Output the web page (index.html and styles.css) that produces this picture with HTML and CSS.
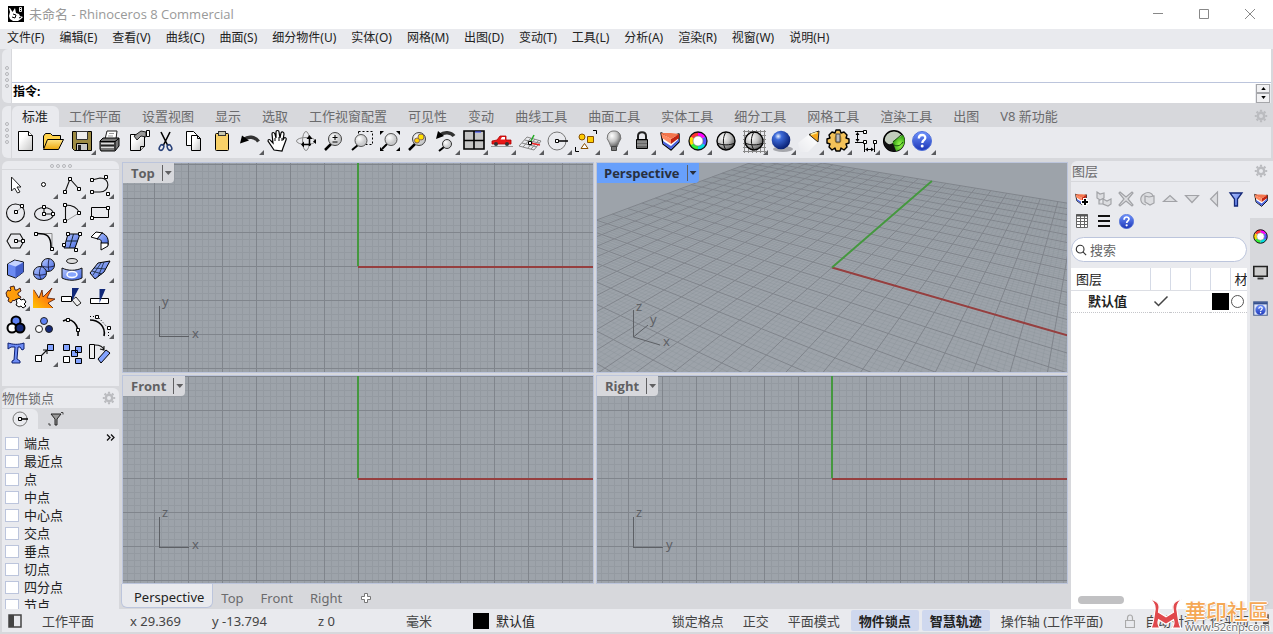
FILE: index.html
```html
<!DOCTYPE html>
<html lang="zh-CN">
<head>
<meta charset="utf-8">
<title>未命名 - Rhinoceros 8 Commercial</title>
<link rel="stylesheet" href="styles.css">
</head>
<body>
<svg class="defs" aria-hidden="true">
  <defs>
    <linearGradient id="blue" x1="0" y1="0" x2="1" y2="1"><stop offset="0" stop-color="#b4c6ff"/><stop offset="1" stop-color="#4468e0"/></linearGradient>
    <linearGradient id="help" x1="0" y1="0" x2="0" y2="1"><stop offset="0" stop-color="#6f94ff"/><stop offset="1" stop-color="#1c35b5"/></linearGradient>
    <linearGradient id="paper" x1="0" y1="0" x2="1" y2="1"><stop offset="0.3" stop-color="#fff"/><stop offset="1" stop-color="#c4c4c4"/></linearGradient>
    <linearGradient id="gold" x1="0" y1="0" x2="0" y2="1"><stop offset="0" stop-color="#ffe68a"/><stop offset="1" stop-color="#eda70c"/></linearGradient>
    <linearGradient id="fire" x1="1" y1="0" x2="0" y2="1"><stop offset="0" stop-color="#ff4a00"/><stop offset="0.4" stop-color="#ff7a10"/><stop offset="1" stop-color="#ffc400"/></linearGradient>
    <linearGradient id="beam" x1="1" y1="0" x2="0" y2="1"><stop offset="0.1" stop-color="#fff"/><stop offset="1" stop-color="#fff" stop-opacity="0"/></linearGradient>
    <radialGradient id="glass" cx="0.35" cy="0.35"><stop offset="0" stop-color="#fff"/><stop offset="1" stop-color="#c9cacc"/></radialGradient>
    <radialGradient id="ballgray" cx="0.35" cy="0.3" r="0.75"><stop offset="0" stop-color="#fff"/><stop offset="0.5" stop-color="#c4c4c4"/><stop offset="1" stop-color="#555"/></radialGradient>
    <radialGradient id="ballblue" cx="0.35" cy="0.3" r="0.75"><stop offset="0" stop-color="#e8f2ff"/><stop offset="0.25" stop-color="#3d6ad8"/><stop offset="1" stop-color="#041a6c"/></radialGradient>
    <radialGradient id="ballgreen" cx="0.6" cy="0.6" r="0.6"><stop offset="0" stop-color="#9bff50"/><stop offset="1" stop-color="#2d9c10"/></radialGradient>
    <symbol id="gear" viewBox="0 0 14 14"><g fill="none" stroke="#bbbcc0"><circle cx="7" cy="7" r="3.2" stroke-width="2.4"/><path d="M7 .8v2M7 11.200v2M.8 7h2M11.200 7h2M2.600 2.600l1.500 1.500M9.900 9.900l1.500 1.500M2.600 11.400l1.500-1.500M9.900 4.100l1.500-1.500" stroke-width="2.200"/></g></symbol>
    <symbol id="lens" viewBox="0 0 28 28"><path d="M5 23l6-6" stroke="#000" stroke-width="2.500"/><circle cx="15" cy="12" r="6.500" fill="url(#glass)" stroke="#444"/></symbol>
    <symbol id="wheel" viewBox="0 0 20 20"><g fill="none" stroke-width="4"><path d="M10 3A7 7 0 0 1 16 6.500" stroke="#f0f"/><path d="M4 6.500A7 7 0 0 1 10 3" stroke="#f33"/><path d="M4 13.500A7 7 0 0 1 4 6.500" stroke="#fd0"/><path d="M10 17A7 7 0 0 1 4 13.500" stroke="#3e3"/><path d="M16 13.500A7 7 0 0 1 10 17" stroke="#0dd"/><path d="M16 6.500A7 7 0 0 1 16 13.500" stroke="#55f"/></g><circle cx="10" cy="10" r="9" fill="none" stroke="#111" stroke-width="1.300"/><circle cx="10" cy="10" r="5" fill="#fff" stroke="#666" stroke-width=".6"/></symbol>
    <symbol id="layers" viewBox="0 0 20 20"><path d="M1 2l9 3.500L19 3v8l-8 8-8-6z" fill="#fff" stroke="#000" stroke-width="1.400" stroke-linejoin="round"/><path d="M3 12.500l8 6 8-8V8l-8 7-8-5z" fill="#4a63dc"/><path d="M11 8l8-5v4l-8 6z" fill="#c32410"/><path d="M1 2l10 6v5L2 7z" fill="#ff8a62"/><path d="M1 2l10 0 8 1-8 5z" fill="#f4754c"/></symbol>
    <symbol id="question" viewBox="0 0 20 20"><circle cx="10" cy="10" r="9.500" fill="url(#help)" stroke="#5070d8"/><path d="M6.800 7.500C6.800 2.800 13.500 3 13.300 7c-.2 2.200-3 2.400-3 5" fill="none" stroke="#fff" stroke-width="2.300"/><circle cx="10.200" cy="15" r="1.500" fill="#fff"/></symbol>
    <symbol id="sphere" viewBox="0 0 20 20"><circle cx="10" cy="10" r="9" fill="url(#ballgray)" stroke="#000" stroke-width="1.400"/><path d="M10 1c-3.500 5-3.500 13 0 18M1 12c5 2.500 13 2.500 18 0" fill="none" stroke="#111"/></symbol>
  </defs>
</svg>

<div class="app">
  <header class="titlebar">
    <svg class="applogo" viewBox="0 0 16 16"><path fill="#000" d="M0 0h16v16H0z"/><path fill="#fff" d="M1 2l1 0 2.500 4L7 2l1 5 3 1 1 2 3 1-2 2-3 2H5L2 13l-1-3 1-4z"/><path d="M5 8l3 1-1 3-3-1M11 12l2-1" stroke="#000" fill="none"/><path d="M11.500 1.500h2v2h-2zM11.500 3.500h2v2h-2z" stroke="#fff" stroke-width=".9" fill="none"/></svg>
    <h1>未命名 - Rhinoceros 8 Commercial</h1>
    <div class="winbtns">
      <button aria-label="最小化"><svg viewBox="0 0 12 12"><path d="M1 5.500h10"/></svg></button>
      <button aria-label="最大化"><svg viewBox="0 0 12 12"><path d="M1.500 1.500h9v9h-9z"/></svg></button>
      <button aria-label="关闭"><svg viewBox="0 0 12 12"><path d="M1 1l10 10M11 1L1 11"/></svg></button>
    </div>
  </header>

  <nav class="menubar">
    <button>文件(F)</button><button>编辑(E)</button><button>查看(V)</button><button>曲线(C)</button><button>曲面(S)</button><button>细分物件(U)</button><button>实体(O)</button><button>网格(M)</button><button>出图(D)</button><button>变动(T)</button><button>工具(L)</button><button>分析(A)</button><button>渲染(R)</button><button>视窗(W)</button><button>说明(H)</button>
  </nav>

  <section class="command">
    <div class="grip"><i></i><i></i><i></i><i></i></div>
    <div class="cmdbody">
      <div class="history"></div>
      <div class="prompt">
        <label for="cmd">指令:</label><input id="cmd" type="text">
        <div class="spin"><button aria-label="上"><svg viewBox="0 0 6 4"><path d="M0 4l3-4 3 4z"/></svg></button><button aria-label="下"><svg viewBox="0 0 6 4"><path d="M0 0l3 4 3-4z"/></svg></button></div>
      </div>
    </div>
  </section>

  <section class="toolbox">
    <div class="grip"><i></i><i></i><i></i><i></i></div>
    <div class="toolbody">
      <div class="tabs">
        <button class="on">标准</button><button>工作平面</button><button>设置视图</button><button>显示</button><button>选取</button><button>工作视窗配置</button><button>可见性</button><button>变动</button><button>曲线工具</button><button>曲面工具</button><button>实体工具</button><button>细分工具</button><button>网格工具</button><button>渲染工具</button><button>出图</button><button>V8 新功能</button>
        <svg class="gear"><use href="#gear"/></svg>
      </div>
      <div class="tools">
        <button aria-label="新建"><svg viewBox="0 0 28 28"><path d="M6.500 4.500h10l4 4v15h-14z" fill="url(#paper)" stroke="#000"/><path d="M16.500 4.500v4h4" fill="#fff" stroke="#000"/></svg></button>
        <button aria-label="打开"><svg viewBox="0 0 28 28"><path d="M3.500 21V9l2-2.500h5l2 2h8V12" fill="#ffd24a" stroke="#000"/><path d="M3.500 22.500l4-10h16l-5 10z" fill="url(#gold)" stroke="#000"/></svg></button>
        <button aria-label="保存" class="fly"><svg viewBox="0 0 28 28"><path d="M4.500 4.500h19v19h-17l-2-2z" fill="#9c8a42" stroke="#000"/><path d="M8.500 4.500h11v8h-11z" fill="#eee" stroke="#333"/><path d="M8.500 16.500h11v7h-11z" fill="#c9c9c9" stroke="#000"/><path d="M10 18h3v5h-3z" fill="#222"/></svg></button>
        <button aria-label="打印"><svg viewBox="0 0 28 28"><path d="M9 12l2-8h10l-1 8z" fill="#fff" stroke="#222"/><path d="M13 6.500h5M12 9h5" stroke="#999"/><path d="M4 14l3-3h16v8l-4 5H5l-1-2z" fill="#777" stroke="#000"/><path d="M4 14.500h15l4-3M19 14v9" fill="none" stroke="#000"/><path d="M5 16.500h13M5 20.500h13" stroke="#ddd"/><path d="M5 18.500h13" stroke="#222"/></svg></button>
        <button aria-label="属性"><svg viewBox="0 0 28 28"><path d="M6.500 7.500h14v12l-4 4h-10z" fill="url(#paper)" stroke="#000"/><path d="M20.500 19.500h-4v4" fill="#ccc" stroke="#000"/><path d="M10 9l7-5 5 1v5l-5-1-4 4z" fill="#999" stroke="#222"/><path d="M22.500 3.500h3v6h-3z" fill="#fff" stroke="#000"/></svg></button>
        <button aria-label="剪切"><svg viewBox="0 0 28 28"><path d="M9 5l7 14M18 5l-7 14" stroke="#000" stroke-width="1.600"/><g fill="none" stroke="#274078" stroke-width="1.500"><ellipse cx="9.500" cy="20.500" rx="2" ry="3" transform="rotate(30 9.500 20.500)"/><ellipse cx="17.500" cy="20.500" rx="2" ry="3" transform="rotate(-30 17.500 20.500)"/></g></svg></button>
        <button aria-label="复制"><svg viewBox="0 0 28 28"><path d="M6.500 4.500h7l3 3v11h-10z" fill="#fff" stroke="#000"/><path d="M11.500 8.500h6l3 3v12h-9z" fill="url(#paper)" stroke="#000"/><path d="M17.500 8.500v3h3" fill="none" stroke="#000"/></svg></button>
        <button aria-label="粘贴"><svg viewBox="0 0 28 28"><rect x="7.500" y="6.500" width="13" height="17" rx="1" fill="#f8d168" stroke="#000"/><rect x="10.500" y="4.500" width="7" height="4" fill="#c9c9b0" stroke="#333"/></svg></button>
        <button aria-label="撤销" class="fly"><svg viewBox="0 0 28 28"><path d="M8 12.500c4-3.500 11-3 14.500 2" fill="none" stroke="#333" stroke-width="3.500"/><path d="M4 16.500l2-8 7 5z"/></svg></button>
        <button aria-label="平移"><svg viewBox="0 0 28 28"><path d="M10 23l-6-9c0-2 2-2 3 0l2 2-1-9c0-2 2-2 3 0l1 4V5c0-2 3-2 3 0l1 6 1-5c1-2 3-1 3 1l-1 6 1-2c1-1 3 0 2 2l-3 8-1 3z" fill="#fff" stroke="#000" stroke-width="1.200"/><path d="M11 11v3M15 10v4M18 11v3" stroke="#000"/></svg></button>
        <button aria-label="旋转视图"><svg viewBox="0 0 28 28"><g fill="none" stroke="#888"><ellipse cx="14" cy="14" rx="9.500" ry="3.500"/><ellipse cx="14" cy="14" rx="3.500" ry="9.500"/></g><path d="M10 17.500h9M17.500 10v9" stroke="#000" stroke-width="1.500"/><path d="M12 14.500l-3 3 3 3zM14.500 12l3-4 3 4zM21 14.500l3-2.500v5z"/></svg></button>
        <button aria-label="动态缩放"><svg viewBox="0 0 28 28"><use href="#lens"/><path d="M12.500 10.500h5M15 8v5M12.500 15h5" stroke="#000"/></svg></button>
        <button aria-label="框选缩放"><svg viewBox="0 0 28 28"><path d="M10.500 4.500h14v13h-14z" fill="none" stroke="#000" stroke-dasharray="2 2"/><path d="M4 23l6-5" stroke="#000" stroke-width="2"/><circle cx="13" cy="13.500" r="6" fill="url(#glass)" stroke="#555"/></svg></button>
        <button aria-label="缩放至最大范围"><svg viewBox="0 0 28 28"><path d="M4 4h4L4 8zM24 4h-4l4 4zM4 24h4l-4-4zM24 24h-4l4-4z"/><path d="M6 22l5-5" stroke="#000" stroke-width="2"/><circle cx="15" cy="12.500" r="6" fill="url(#glass)" stroke="#555"/></svg></button>
        <button aria-label="缩放选取物件"><svg viewBox="0 0 28 28"><use href="#lens"/><circle cx="17" cy="10" r="3" fill="#ffe000" stroke="#865"/><circle cx="13" cy="13.500" r="2.500" fill="#ffd000" stroke="#865"/></svg></button>
        <button aria-label="复原视图" class="fly"><svg viewBox="0 0 28 28"><path d="M8 8c4-3.500 11-3 14 1" fill="none" stroke="#333" stroke-width="3.500"/><path d="M4 12l2-8 6 5z"/><path d="M7 24l5-4" stroke="#000" stroke-width="2"/><circle cx="15" cy="17" r="4.500" fill="url(#glass)" stroke="#333"/></svg></button>
        <button aria-label="四视窗" class="fly"><svg viewBox="0 0 28 28"><path d="M4 4h20v18H4z" fill="#c5c5c5" stroke="#000" stroke-width="1.600"/><path d="M14 4v18M4 13.500h20" stroke="#000" stroke-width="1.600"/><path d="M15 5h6" stroke="#34f"/></svg></button>
        <button aria-label="设置视图" class="fly"><svg viewBox="0 0 28 28"><path d="M4 17v-3l5-1 3-4h6v4h5v4z" fill="#e81818" stroke="#b00000" stroke-width=".8"/><path d="M12.500 12.500l1.500-2.500h3v2.500z" fill="#fff"/><g fill="#333"><circle cx="8" cy="17" r="2"/><circle cx="19" cy="17" r="2"/></g><path d="M3 19.500h22" stroke="#999"/></svg></button>
        <button aria-label="工作平面" class="fly"><svg viewBox="0 0 28 28"><path d="M3 19l8-9 14 4-7 9zM6 16l15 4M8.500 13l15 3M7 20l8-9M12 21l7-9M15 22l8-9" fill="none" stroke="#888"/><path d="M14 16l10 2" stroke="#e22" stroke-width="1.500"/><path d="M14 16l4-8" stroke="#2a2" stroke-width="1.500"/><path d="M12.500 14.500h3v3h-3z" fill="#fff" stroke="#000"/></svg></button>
        <button aria-label="物件锁点" class="fly"><svg viewBox="0 0 28 28"><circle cx="13" cy="14" r="9" fill="none" stroke="#777"/><path d="M13 14h11" stroke="#000" stroke-width="1.500"/><path d="M11.500 12.500h3v3h-3z" fill="#fff" stroke="#000"/></svg></button>
        <button aria-label="选取" class="fly"><svg viewBox="0 0 28 28"><path d="M21 3.500h3.500V7M3.500 20v4.500H7" fill="none" stroke="#000"/><g fill="#fc0" stroke="#875000"><circle cx="10" cy="10" r="3"/><path d="M15.500 9.500h6v6h-6z"/></g><path d="M9 21.500h7l-3.500-5z" fill="#fff" stroke="#875000"/></svg></button>
        <button aria-label="显示" class="fly"><svg viewBox="0 0 28 28"><path d="M14 4a6.500 6.500 0 0 0-5 11l2 5h6l2-5a6.500 6.500 0 0 0-5-11z" fill="url(#ballgray)" stroke="#777"/><path d="M11.500 19.500h5v4h-5z" fill="#777" stroke="#444"/></svg></button>
        <button aria-label="锁定" class="fly"><svg viewBox="0 0 28 28"><path d="M10 13V9c0-5 8-5 8 0v4" fill="none" stroke="#222" stroke-width="2"/><path d="M8.500 12.500h11v9h-11z" fill="#666" stroke="#000"/><path d="M9 15h10M9 18h10" stroke="#aaa"/></svg></button>
        <button aria-label="图层" class="fly"><svg viewBox="0 0 28 28"><use href="#layers" x="4" y="4" width="20" height="20"/></svg></button>
        <button aria-label="颜色" class="fly"><svg viewBox="0 0 28 28"><use href="#wheel" x="4" y="4" width="20" height="20"/></svg></button>
        <button aria-label="着色"><svg viewBox="0 0 28 28"><use href="#sphere" x="4" y="4" width="20" height="20"/></svg></button>
        <button aria-label="网格显示" class="fly"><svg viewBox="0 0 28 28"><path d="M3 4.500h23M3 8.500h23M3 12.500h23M3 16.500h23M3 20.500h23M3 24.500h23M4.500 3v23M8.500 3v23M12.500 3v23M16.500 3v23M20.500 3v23M24.500 3v23" stroke="#888"/><use href="#sphere" x="4" y="4" width="20" height="20"/></svg></button>
        <button aria-label="渲染" class="fly"><svg viewBox="0 0 28 28"><ellipse cx="15" cy="22" rx="10" ry="3" fill="#a5a6ab"/><circle cx="13" cy="13" r="9.300" fill="url(#ballblue)"/></svg></button>
        <button aria-label="灯光" class="fly"><svg viewBox="0 0 28 28"><path d="M16 5L2 16l2 9h8l10-10z" fill="url(#beam)"/><path d="M13 7.500l10-3.500-1 11z" fill="#f7a81c" stroke="#222"/><path d="M15 7.500l6-2" stroke="#fe9" stroke-width="1.500"/></svg></button>
        <button aria-label="选项" class="fly"><svg viewBox="0 0 28 28"><path d="M11 6l1-3h4l1 3 3-1 3 3-1 3 3 1v4l-3 1 1 3-3 3-3-2-1 3h-4l-1-3-3 2-3-3 1-3-3-1v-4l3-1-1-3 3-3z" fill="#f3c25a" stroke="#000" stroke-width="1.400" stroke-linejoin="round"/><ellipse cx="14" cy="12" rx="3.500" ry="4.500" fill="#bd8a22"/><path d="M12 7h4v8h-4z" fill="#bbb" stroke="#444"/></svg></button>
        <button aria-label="标注" class="fly"><svg viewBox="0 0 28 28"><path d="M3 4.500h8M3 15.500h8M12.500 17v8M22.500 17v8M5.500 6v8M14 22.500h7" stroke="#000" fill="none"/><path d="M3.500 8l2-3 2 3zM3.500 12l2 3 2-3zM16 20.500l-3 2 3 2zM19 20.500l3 2-3 2z"/><path d="M11.500 3.500h3v3h-3zM11.500 13.500h3v3h-3zM21.500 13.500h3v3h-3z" fill="#fff" stroke="#000"/></svg></button>
        <button aria-label="Grasshopper" class="fly"><svg viewBox="0 0 28 28"><circle cx="14" cy="14" r="10.300" fill="#c2ccbd" stroke="#000" stroke-width="1.500"/><path d="M13 14l10-6a10.500 10.500 0 0 1-7 16c-3-2-4-6-3-10z" fill="url(#ballgreen)"/><path d="M4 12c3 6 6 6 9 4l3 8a10.500 10.500 0 0 1-12-12z" fill="#111"/><path d="M13 15l8-7M14 18c4 2 7 0 9-3" stroke="#154f0a" fill="none"/></svg></button>
        <button aria-label="说明" class="fly"><svg viewBox="0 0 28 28"><use href="#question" x="4" y="4" width="20" height="20"/></svg></button>
      </div>
    </div>
  </section>

  <main class="work">
    <aside class="left">
      <section class="palette">
        <div class="hgrip"><i></i><i></i><i></i><i></i></div>
        <div class="palgrid">
          <button aria-label="选取"><svg viewBox="0 0 28 28"><path d="M9.500 6v14l3-3 3 5 2.500-1-3-5h4z" fill="#fff" stroke="#222"/></svg></button>
          <button aria-label="点" class="fly"><svg viewBox="0 0 28 28"><circle cx="13.500" cy="13.500" r="2" fill="#fff" stroke="#000"/></svg></button>
          <button aria-label="多重直线" class="fly"><svg viewBox="0 0 28 28"><path d="M7 21l5-13 9 10" class="k"/><path d="M5.500 19.500h3v3h-3zM10.500 6.500h3v3h-3zM19.500 16.500h3v3h-3z" class="n"/></svg></button>
          <button aria-label="曲线" class="fly"><svg viewBox="0 0 28 28"><path d="M6 9l8-2c11 0 10 14 0 14H6" class="k"/><path d="M4.500 7.500h3v3h-3zM18.500 4.500h3v3h-3zM4.500 19.500h3v3h-3zM20.500 21.500h3v3h-3z" class="n"/></svg></button>
          <button aria-label="圆" class="fly"><svg viewBox="0 0 28 28"><circle cx="13.500" cy="14" r="9" class="k"/><path d="M14 13l6-5" class="g"/><path d="M12.500 11.500h3v3h-3zM18.500 5.500h3v3h-3z" class="n"/></svg></button>
          <button aria-label="椭圆" class="fly"><svg viewBox="0 0 28 28"><ellipse cx="14" cy="15" rx="9.500" ry="6.500" class="k"/><path d="M14 9v6h9" class="k"/><path d="M12.500 6.500h3v3h-3zM12.500 13.500h3v3h-3zM21.500 13.500h3v3h-3z" class="n"/></svg></button>
          <button aria-label="圆弧" class="fly"><svg viewBox="0 0 28 28"><path d="M8 22l13-8" class="g"/><path d="M7.500 21V6c7 0 12 3 14 8" class="k"/><path d="M5.500 4.500h3v3h-3zM19.500 12.500h3v3h-3zM5.500 20.500h3v3h-3z" class="n"/></svg></button>
          <button aria-label="矩形" class="fly"><svg viewBox="0 0 28 28"><path d="M5.500 8.500h17v10h-17z" fill="none" stroke="#000"/><path d="M20.500 7.500h3v3h-3zM4.500 17.500h3v3h-3z" class="n"/></svg></button>
          <button aria-label="多边形" class="fly"><svg viewBox="0 0 28 28"><path d="M5 14l4-7h9l4 7-4 7H9zM14 14h8" class="k"/><path d="M12.500 12.500h3v3h-3zM19.500 12.500h3v3h-3z" class="n"/></svg></button>
          <button aria-label="圆角" class="fly"><svg viewBox="0 0 28 28"><path d="M8 6.500h14v15" fill="none" stroke="#888"/><path d="M7 6.500c10 0 14 2 14 14" fill="none" stroke="#000" stroke-width="1.600"/><path d="M4.500 5.500h3v3h-3zM20.500 20.500h3v3h-3z" class="n"/></svg></button>
          <button aria-label="曲面" class="fly"><svg viewBox="0 0 28 28"><path d="M10 7h12l-5 14H6z" fill="url(#blue)" stroke="#000"/><path d="M15.500 7l-4 14M8 14h12" stroke="#123"/><path d="M8.500 5.500h3v3h-3zM20.500 5.500h3v3h-3zM4.500 16.500h3v3h-3zM16.500 21.500h3v3h-3z" class="n"/></svg></button>
          <button aria-label="曲面圆角" class="fly"><svg viewBox="0 0 28 28"><path d="M5 10l5-5 7 1-5 6z" fill="#fff" stroke="#000"/><path d="M16 6c5 2 7 6 6 12l-7-2c1-3-1-4-4-4z" fill="url(#blue)" stroke="#000"/><path d="M15 16v7l7-4v-3z" fill="#fff" stroke="#000"/></svg></button>
          <button aria-label="立方体" class="fly"><svg viewBox="0 0 28 28"><path d="M5.500 9l7-4 9 2v10l-8 6-8-3z" fill="#6b8af2" stroke="#111"/><path d="M6 9l7-3.500 8 2-7.500 4z" fill="#c5d3ff"/><path d="M13.500 12l8-4.500V17l-8 6z" fill="#4460cc"/></svg></button>
          <button aria-label="球体" class="fly"><svg viewBox="0 0 28 28"><g fill="url(#blue)" stroke="#111"><circle cx="18" cy="10" r="6.500"/><circle cx="10" cy="18" r="6.500"/></g><path d="M11 12c-2 4-2 8 0 12M4 19c4 1.500 8 1.500 12 0M19 4c-1 4-1 8 0 12M12 11c4 1.500 8 1.500 12 0" stroke="#113" fill="none" stroke-width=".8"/></svg></button>
          <button aria-label="投影" class="fly"><svg viewBox="0 0 28 28"><ellipse cx="14" cy="6" rx="5.500" ry="2.500" fill="#ddd" stroke="#222"/><path d="M4 13c6 3 14 3 20 0v10c-6 3-14 3-20 0z" fill="url(#blue)" stroke="#111"/><ellipse cx="14" cy="19.500" rx="5" ry="3" fill="#88a7ff" stroke="#fff" stroke-width="1.500"/></svg></button>
          <button aria-label="网格" class="fly"><svg viewBox="0 0 28 28"><path d="M4 18l8-10 12-2-6 11-9 7z" fill="url(#blue)" stroke="#000"/><path d="M8 13l12 1M12 22l6-15M7 20l8-12M6 16l10 3" stroke="#123" stroke-width=".8"/></svg></button>
          <button aria-label="组合" class="fly"><svg viewBox="0 0 28 28"><path d="M4 10l2-3 2 1 1-1-1-3 4-1 1 4 2 0 3-2 1 3-3 2 0 2 3 2-2 3-3-1-2 2-1-1-2 3-3-2 1-3-2-1z" fill="#ff9d0a" stroke="#422"/><path d="M14 17l3-2 2 2 3-1 2 3-2 2 2 2-3 2-2-2-2 1-3-2 1-2z" fill="#fff" stroke="#000"/></svg></button>
          <button aria-label="炸开"><svg viewBox="0 0 28 28"><path d="M3 25V6l6 9 3-8 1 7 9-9-5 10 8 1-7 4 5 5z" fill="url(#fire)"/><path d="M4 7l5 8 3-8 1 7 9-9-5 10 8 1-7 4 5 5" fill="none" stroke="#501800" stroke-width=".8"/></svg></button>
          <button aria-label="修剪"><svg viewBox="0 0 28 28"><path d="M3.500 13.500h10v5h-10z" fill="#fff" stroke="#000"/><path d="M14 17l4-3 5 6-4 3z" fill="#eee" stroke="#222"/><path d="M14 5h7l-7 13z" fill="#102878"/></svg></button>
          <button aria-label="分割"><svg viewBox="0 0 28 28"><path d="M4.500 15.500h18v5h-18z" fill="#fff" stroke="#000"/><path d="M13.500 6h6l-6 14z" fill="#102878"/></svg></button>
          <button aria-label="群组" class="fly"><svg viewBox="0 0 28 28"><g stroke="#000" stroke-width="2"><circle cx="14" cy="10" r="4.500" fill="#5d81f5"/><circle cx="10" cy="17" r="4.500" fill="#fff"/><circle cx="18" cy="17" r="4.500" fill="#142878"/></g></svg></button>
          <button aria-label="解散群组"><svg viewBox="0 0 28 28"><g stroke="#222"><circle cx="14" cy="10" r="3.500" fill="#5d81f5"/><circle cx="9" cy="18" r="3.500" fill="#fff"/><circle cx="19" cy="18" r="3.500" fill="#142878"/></g></svg></button>
          <button aria-label="编辑点"><svg viewBox="0 0 28 28"><path d="M5 10c9-4 16 3 15 15" fill="none" stroke="#000" stroke-width="1.600"/><path d="M8.500 7.500h3v3h-3zM18.500 17.500h3v3h-3z" class="n"/></svg></button>
          <button aria-label="控制点" class="fly"><svg viewBox="0 0 28 28"><path d="M4 9c8 0 16 6 14 16" fill="none" stroke="#000" stroke-width="1.600"/><path d="M4 5.500h6M13 7l8 9M22.500 18v7" stroke="#000" stroke-dasharray="1 2"/><path d="M9.500 4.500h3v3h-3zM21.500 15.500h3v3h-3z" class="n"/></svg></button>
          <button aria-label="文字"><svg viewBox="0 0 28 28"><path d="M6 4c5 1.500 10 2 16 0v6l-2 1-2-3h-2l-1 12 3 2v2h-8v-2l2-1 1-13H9l-3 2z" fill="#6d8cf5" stroke="#0c1e70"/></svg></button>
          <button aria-label="移动" class="fly"><svg viewBox="0 0 28 28"><path d="M5.500 16.500h6v6h-6z" fill="#fff" stroke="#000"/><path d="M17.500 5.500h6v6h-6z" fill="#83a3ff" stroke="#000"/><path d="M11 17l6-6M13 11h4v4" class="k"/></svg></button>
          <button aria-label="阵列"><svg viewBox="0 0 28 28"><g fill="#83a3ff" stroke="#000"><path d="M5.500 5.500h6v6h-6zM17.500 7.500h6v6h-6zM13.500 11.500h6v6h-6zM17.500 19.500h6v5h-6z"/><path d="M5.500 17.500h6v6h-6z" fill="#fff"/></g></svg></button>
          <button aria-label="变换"><svg viewBox="0 0 28 28"><path d="M3.500 5.500h5v14h-5z" fill="#eee" stroke="#000"/><path d="M12 20l8-9 4 3-9 10z" fill="#83a3ff" stroke="#000"/><path d="M9 6c5 0 8 2 9 5M14 10l4 1 0-4" class="k"/></svg></button>
        </div>
      </section>
      <section class="osnap">
        <header><h2>物件锁点</h2><svg class="gear"><use href="#gear"/></svg></header>
        <div class="osntabs">
          <button class="on" aria-label="锁点"><svg viewBox="0 0 20 20"><circle cx="10" cy="10" r="7" fill="none" stroke="#777"/><path d="M10 10h8" stroke="#000" stroke-width="1.500"/><path d="M8.500 8.500h3v3h-3z" fill="#fff" stroke="#000"/></svg></button>
          <button aria-label="过滤器"><svg viewBox="0 0 20 20"><path d="M5 5h10l-4 5v6H9v-6z" fill="#999" stroke="#222"/><path d="M15 3.500h2v2M3 14v2h2" fill="none" stroke="#444"/></svg></button>
        </div>
        <div class="snaps">
          <ul>
            <li><label><input type="checkbox">端点</label></li>
            <li><label><input type="checkbox">最近点</label></li>
            <li><label><input type="checkbox">点</label></li>
            <li><label><input type="checkbox">中点</label></li>
            <li><label><input type="checkbox">中心点</label></li>
            <li><label><input type="checkbox">交点</label></li>
            <li><label><input type="checkbox">垂点</label></li>
            <li><label><input type="checkbox">切点</label></li>
            <li><label><input type="checkbox">四分点</label></li>
            <li><label><input type="checkbox">节点</label></li>
          </ul>
          <button class="more" aria-label="更多"><svg viewBox="0 0 9 7"><path d="M1 .5l3 3-3 3M5 .5l3 3-3 3"/></svg></button>
        </div>
      </section>
    </aside>

    <section class="center">
      <div class="views">
        <div class="view"><svg class="scene" data-view="ortho" data-h="x" data-v="y"></svg><div class="vtitle"><span>Top</span><button aria-label="Top 菜单"></button></div></div>
        <div class="view"><svg class="scene" data-view="persp"></svg><div class="vtitle active"><span>Perspective</span><button aria-label="Perspective 菜单"></button></div></div>
        <div class="view"><svg class="scene" data-view="ortho" data-h="x" data-v="z"></svg><div class="vtitle"><span>Front</span><button aria-label="Front 菜单"></button></div></div>
        <div class="view"><svg class="scene" data-view="ortho" data-h="y" data-v="z"></svg><div class="vtitle"><span>Right</span><button aria-label="Right 菜单"></button></div></div>
      </div>
      <div class="vtabs">
        <button class="on">Perspective</button><button>Top</button><button>Front</button><button>Right</button>
        <button class="plus" aria-label="新增"><svg viewBox="0 0 10 10"><path d="M3.500.5h3v3h3v3h-3v3h-3v-3h-3v-3h3z" fill="#fff" stroke="#777"/></svg></button>
      </div>
    </section>

    <aside class="right">
      <div class="layers">
        <h2>图层</h2>
        <div class="ltools">
          <button aria-label="新图层"><svg viewBox="0 0 22 22"><use href="#layers" x="4" y="5" width="12" height="12"/><path d="M14 10v8M10 14h8" stroke="#fff" stroke-width="4"/><path d="M14 11v6M11 14h6" stroke="#000" stroke-width="2"/></svg></button>
          <button aria-label="子图层"><svg viewBox="0 0 22 22"><path d="M4 4l3 2 4-1v5l-4 2-3-2zM10 11l4 2 4-2v5l-3 2-5-2zM6 12v4h4" class="dis"/></svg></button>
          <button aria-label="删除"><svg viewBox="0 0 22 22"><path d="M5 4l6 5 6-5 1 1-5 6 5 6-1 1-6-5-6 5-1-1 5-6-5-6z" class="dis"/></svg></button>
          <button aria-label="复制图层"><svg viewBox="0 0 22 22"><path d="M9 17c-6-1-7-8-2-11 4-3 8-1 9 2M8 8l4 1 5-1v7l-4 2-5-3z" class="dis"/></svg></button>
          <button aria-label="上移"><svg viewBox="0 0 22 22"><path d="M4.500 13.500h13l-6.500-6z" class="dis"/></svg></button>
          <button aria-label="下移"><svg viewBox="0 0 22 22"><path d="M4.500 7.500h13l-6.500 7z" class="dis"/></svg></button>
          <button aria-label="父级"><svg viewBox="0 0 22 22"><path d="M14.500 4v14l-7-7z" class="dis"/></svg></button>
          <button aria-label="过滤"><svg viewBox="0 0 22 22"><path d="M5 5h12l-4.500 6v7h-3v-7z" fill="url(#blue)" stroke="#142878" stroke-width="1.300"/></svg></button>
          <button aria-label="栏"><svg viewBox="0 0 22 22"><path d="M5.500 4.500h11v13h-11zM5 8.500h12M5 11.500h12M5 14.500h12M9.500 5v12M13.500 5v12" fill="#fff" stroke="#666"/><path d="M5 5.500h12" stroke="#555" stroke-width="2"/></svg></button>
          <button aria-label="菜单"><svg viewBox="0 0 22 22"><path d="M5 6h12M5 11h12M5 16h12" stroke="#111" stroke-width="1.800"/></svg></button>
          <button aria-label="说明"><svg viewBox="0 0 22 22"><use href="#question" x="4" y="4" width="15" height="15"/></svg></button>
        </div>
        <label class="search"><svg viewBox="0 0 14 14"><circle cx="6" cy="6" r="4.500"/><path d="M9 9l4 4"/></svg><input type="text" placeholder="搜索" aria-label="搜索"></label>
        <div class="list">
          <table>
            <thead><tr><th class="name">图层</th><th></th><th></th><th></th><th></th><th>材</th></tr></thead>
            <tbody><tr><td class="name">默认值</td><td><svg class="tick" viewBox="0 0 16 12"><path d="M1.500 6.500l4 4 9-9"/></svg></td><td></td><td></td><td><span class="black"></span></td><td><span class="ring"></span></td></tr></tbody>
          </table>
          <div class="thumb"></div>
        </div>
      </div>
      <div class="side">
        <svg class="gear"><use href="#gear"/></svg>
        <button class="on" aria-label="图层"><svg viewBox="0 0 20 20"><use href="#layers"/></svg></button>
        <button aria-label="材质"><svg viewBox="0 0 20 20"><use href="#wheel"/></svg></button>
        <button aria-label="显示"><svg viewBox="0 0 20 20"><path d="M1 2h18v13H1z" fill="#ccc" stroke="#222" stroke-width="2.200"/><path d="M6 18h8" stroke="#333" stroke-width="2.500"/></svg></button>
        <button aria-label="说明"><svg viewBox="0 0 20 20"><path d="M1 1h18v18H1z" fill="#dfe6fb" stroke="#4c6392" stroke-width="1.500"/><path d="M1 3h18" stroke="#35508d" stroke-width="3"/><use href="#question" x="3" y="5" width="14" height="14"/></svg></button>
      </div>
    </aside>
  </main>

  <footer class="status">
    <button class="pane" aria-label="面板"><svg viewBox="0 0 14 14"><path d="M1 1h12v12H1z" fill="none" stroke="#444" stroke-width="1.500"/><path d="M1 1h5v12H1z" fill="#444"/></svg></button>
    <span class="cplane">工作平面</span><span class="cx">x 29.369</span><span class="cy">y -13.794</span><span class="cz">z 0</span><span class="unit">毫米</span>
    <span class="layer"><i></i>默认值</span>
    <div class="modes">
      <button>锁定格点</button><button>正交</button><button>平面模式</button><button class="on">物件锁点</button><button class="on">智慧轨迹</button><button>操作轴 (工作平面)</button>
      <button class="auto"><svg viewBox="0 0 10 14"><path d="M2.500 6V4c0-4 5-4 5 0v2M.5 6.500h9v7h-9z"/></svg>自动对齐工作平面</button>
      <button class="edge" aria-label="右面板"><svg viewBox="0 0 14 14"><path d="M1 1h12v12H1z" fill="none" stroke="#444" stroke-width="1.500"/><path d="M8 1h5v12H8z" fill="#444"/></svg></button>
    </div>
  </footer>

  <div class="mark">
    <svg viewBox="0 0 36 34"><path d="M1 1c12 3 10 9 9 14l8 5 8-5c-1-5-3-11 9-14-6 5-6 9-5 14 1 6 1 12 4 17H24c3-3 3-6 2-9l-8 5-8-5c-1 3-1 6 2 9H2c3-5 3-11 4-17 1-5 1-9-5-14z" fill="#e0484c" stroke="#fff" stroke-width="1.200"/></svg>
    <div><b>華印社區</b><small>www.52cnp.com</small></div>
  </div>
</div>
<script src="views.js"></script>
</body>
</html>
```
FILE: styles.css
```css
* { box-sizing: border-box; }
:root {
  --panel: #e9eaee;
  --frame: #d7d8dc;
  --line: #bcc5dc;
  --dim: #6b6b6d;
}
html, body { height: 100%; }
body {
  margin: 0;
  overflow: hidden;
  background: var(--frame);
  color: #222;
  font: 13px/18px "Noto Sans", "Noto Sans CJK SC", sans-serif;
}
button, input { font: inherit; color: inherit; }
button { margin: 0; padding: 0; border: 0; background: none; }
h1, h2, ul { margin: 0; padding: 0; font-weight: 400; font-size: 13px; }
ul { list-style: none; }
svg { display: block; }
.defs { position: absolute; width: 0; height: 0; }
.gear { width: 14px; height: 14px; }
.k { fill: none; stroke: #111; stroke-width: 1.1; }
.g { fill: none; stroke: #999; }
.n { fill: #fff; stroke: #000; stroke-width: 1; }
.dis { fill: #dcdde0; stroke: #a2a3a7; stroke-width: 1.2; }

.app { position: relative; display: flex; flex-direction: column; height: 100%; }

.titlebar { display: flex; align-items: center; height: 29px; padding: 0 0 2px 8px; background: #fff; }
.applogo { width: 16px; height: 16px; margin-right: 5px; }
.titlebar h1 { flex: 1; color: #999; font-family: "Open Sans", "Noto Sans CJK SC", sans-serif; }
.winbtns { display: flex; }
.winbtns button { display: grid; place-items: center; width: 46px; height: 27px; }
.winbtns svg { width: 12px; height: 12px; fill: none; stroke: #888; }

.menubar { display: flex; height: 20px; background: var(--panel); font-size: 12px; }
.menubar button { padding: 0 8px 2px 7px; white-space: nowrap; }

.grip { display: flex; flex-direction: column; align-items: center; gap: 2px; width: 9px; background: var(--panel); border-radius: 6px 0 0 6px; }
.grip i, .hgrip i { width: 4px; height: 4px; border: 1px solid #b4b5b9; border-radius: 2px; }

.command { display: flex; height: 54px; padding: 0 2px; }
.command .grip { padding-top: 17px; margin-right: 1px; }
.cmdbody { flex: 1; background: #fff; }
.history { height: 34px; border-bottom: 1px solid var(--line); }
.prompt { display: flex; align-items: center; height: 20px; padding-left: 1px; font-weight: 700; font-size: 12px; color: #000; }
.prompt label { padding-bottom: 2px; }
.prompt input { flex: 1; height: 18px; border: 0; outline: 0; background: none; }
.spin { display: grid; width: 16px; height: 19px; padding: 0 1px; background: var(--panel); }
.spin button { display: grid; place-items: center; border: 1px solid #a5a6aa; background: #f1f1f3; }
.spin svg { width: 5px; height: 3px; }

.toolbox { display: flex; padding: 3px 2px 2px; height: 57px; }
.toolbox .grip { padding-top: 16px; margin-right: 1px; }
.toolbody { flex: 1; display: flex; flex-direction: column; min-width: 0; }
.tabs { display: flex; height: 21px; color: var(--dim); }
.tabs button { padding: 0 11px 1px 10px; white-space: nowrap; }
.tabs .on { background: var(--panel); border-radius: 6px 6px 0 0; color: #222; }
.tabs .gear { margin: 3px 3px 0 auto; }
.tools { display: flex; flex: 1; background: var(--panel); }
.tools button, .palgrid button { position: relative; width: 28px; height: 28px; }
.tools svg, .palgrid svg { width: 28px; height: 28px; }
.fly::after { content: ""; position: absolute; right: 0; bottom: 0; width: 5px; height: 5px; background: #5a5b5e; clip-path: polygon(100% 0, 100% 100%, 0 100%); }

.work { flex: 1; display: flex; min-height: 0; }
.left { display: flex; flex-direction: column; width: 119px; padding: 1px 0 0 2px; }
.palette { flex: 1 0 auto; background: var(--panel); border-radius: 6px 6px 0 0; margin-bottom: 2px; }
.hgrip { display: flex; justify-content: center; gap: 2px; height: 9px; padding-top: 3px; border-bottom: 1px solid var(--frame); }
.palgrid { display: grid; grid-template-columns: repeat(4, 28px); padding-bottom: 18px; margin-top: 1px; }
.osnap { display: flex; flex-direction: column; height: 221px; background: var(--panel); border-radius: 6px 6px 0 0; overflow: hidden; }
.osnap header { display: flex; flex: none; align-items: center; justify-content: space-between; height: 21px; padding-right: 3px; color: var(--dim); border-bottom: 1px solid var(--frame); }
.osntabs { display: flex; flex: none; height: 20px; background: var(--frame); }
.osntabs button { display: grid; place-items: center; width: 36px; }
.osntabs .on { background: var(--panel); border-radius: 0 6px 0 0; }
.osntabs svg { width: 20px; height: 20px; }
.snaps { display: flex; justify-content: space-between; align-items: flex-start; min-height: 0; padding: 5px 4px 0 3px; }
.snaps li { height: 18px; }
.snaps label { display: flex; align-items: center; gap: 5px; }
.snaps input { appearance: none; width: 14px; height: 13px; margin: 0; border: 1px solid var(--line); background: #fff; }
.more svg { width: 9px; height: 7px; fill: none; stroke: #111; stroke-width: 1.300; }

.center { flex: 1; display: flex; flex-direction: column; min-width: 0; padding: 2px 3px 0; }
.views { flex: 1; display: grid; grid-template: 211fr 209fr / 1fr 1fr; gap: 2px; min-height: 0; }
.view { position: relative; min-width: 0; min-height: 0; border: 1px solid var(--line); background: #9da3aa; }
.scene { position: absolute; inset: 0; width: 100%; height: 100%; overflow: hidden; }
.vtitle { position: absolute; left: 0; top: 0; display: flex; height: 20px; padding: 1px 0 0 8px; background: var(--frame); border-radius: 0 0 4px 0; color: #606062; font: 700 13px/19px "Open Sans", "Noto Sans", sans-serif; }
.vtitle button { width: 12px; margin: 1px 0 2px 7px; border-left: 1px solid #606062; display: grid; place-items: center; }
.vtitle button::after { content: ""; width: 7px; height: 4px; background: currentColor; clip-path: polygon(0 0, 100% 0, 50% 100%); }
.vtitle.active { background: #68a0fb; color: #28303f; padding-left: 7px; }
.scene text { fill: #5d6065; font: 13px "Noto Sans", sans-serif; }
.minor, .major, .xaxis, .yaxis, .triad { fill: none; }
.minor { stroke: #949aa1; }
.major { stroke: #80858c; }
.persp .minor { stroke: #7f858d; stroke-opacity: .2; }
.xaxis { stroke: #963f3f; stroke-width: 2; }
.yaxis { stroke: #45983f; stroke-width: 2; }
.triad { stroke: #5d6065; }
.vtabs { display: flex; height: 25px; padding-bottom: 1px; color: var(--dim); }
.vtabs button { padding: 3px 9px 0 8px; }
.vtabs .on { padding: 3px 8px 0 12px; background: var(--panel); border: 1px solid var(--line); border-top: 0; border-radius: 0 0 6px 6px; color: #222; margin-left: -1px; }
.vtabs .plus { padding-left: 10px; }
.plus svg { width: 10px; height: 10px; }

.right { display: flex; width: 202px; padding-top: 1px; }
.layers { flex: 1; display: flex; flex-direction: column; min-width: 0; padding-right: 3px; background: var(--panel); border-radius: 6px 0 0 0; }
.layers h2 { height: 21px; padding: 1px 0 0 1px; margin-right: -5px; color: var(--dim); border-bottom: 1px solid var(--frame); }
.ltools { display: grid; grid-template-columns: repeat(8, 22px); padding: 6px 0 5px; }
.ltools svg { width: 22px; height: 22px; }
.search { display: flex; align-items: center; gap: 3px; height: 25px; padding: 0 3px; border: 1px solid var(--line); border-radius: 13px; background: #fff; }
.search svg { width: 12px; height: 12px; fill: none; stroke: #333; stroke-width: 1.300; }
.search input { flex: 1; min-width: 0; padding: 0; border: 0; outline: 0; background: none; }
.search input::placeholder { color: #666; opacity: 1; }
.list { flex: 1; display: flex; flex-direction: column; justify-content: space-between; min-height: 0; margin-top: 6px; background: #fff; overflow: hidden; }
table { width: 100%; table-layout: fixed; border-collapse: collapse; }
th, td { width: 20px; height: 22px; padding: 0; text-align: left; white-space: nowrap; overflow: hidden; }
th { font-weight: 400; border-bottom: 1px solid #dcdee4; }
th + th { border-left: 1px solid #d5dae6; }
th:last-child, td:last-child { width: 17px; padding-left: 4px; }
td:last-child { padding-left: 1px; }
th.name, td.name { width: auto; padding-left: 5px; }
td.name { padding-left: 17px; font-weight: 700; }
tbody tr { border-bottom: 1px dotted #c5c6ca; }
.tick { width: 16px; height: 12px; margin-left: 3px; fill: none; stroke: #444; stroke-width: 1.500; }
.black { display: block; width: 17px; height: 17px; margin-left: 2px; background: #000; }
.ring { display: block; width: 13px; height: 13px; border: 1px solid #555; border-radius: 50%; }
.thumb { width: 46px; height: 8px; margin: 0 0 5px 7px; border-radius: 4px; background: #c1c1c3; }
.side { flex: none; display: flex; flex-direction: column; align-items: center; width: 23px; padding-right: 2px; background: linear-gradient(var(--panel) 57px, var(--frame) 57px); }
.side .gear { margin: 3px 0 8px; }
.side button { display: grid; place-items: center; width: 21px; height: 36px; }
.side .on { height: 28px; margin-bottom: 4px; }
.side svg { width: 14px; height: 14px; }
.side button:not(.on) svg { width: 15px; height: 15px; }

.status { display: flex; align-items: center; height: 25px; padding: 0 0 2px 6px; margin: 0 0 0 2px; background: linear-gradient(var(--panel) 23px, var(--frame) 23px); color: #444; white-space: nowrap; overflow: hidden; }
.pane { width: 34px; }
.pane svg, .edge svg { width: 14px; height: 14px; }
.cplane { width: 88px; }
.cx { width: 82px; }
.cy { width: 106px; }
.cz { width: 88px; }
.unit { width: 67px; }
.layer { flex: 1; display: flex; align-items: center; gap: 7px; color: #222; }
.layer i { width: 16px; height: 16px; background: #000; }
.modes { display: flex; gap: 3px; padding-right: 4px; }
.modes button { height: 21px; padding: 0 8px; }
.modes .on { background: #cfd8ee; border-radius: 2px; color: #222; font-weight: 700; }
.modes .auto { display: flex; align-items: center; gap: 10px; padding: 0 3px 0 11px; }
.auto svg { width: 10px; height: 14px; fill: none; stroke: #aaa; stroke-width: 1.200; }
.modes .edge { padding: 0; }

.mark { position: absolute; right: 3px; bottom: 1px; display: flex; align-items: flex-end; gap: 1px; }
.mark > svg { width: 36px; height: 32px; margin-bottom: 3px; }
.mark b { display: block; height: 22px; font: 500 21px/22px "Noto Sans CJK TC", sans-serif; color: #f5a855; text-shadow: 1px 0 #fff, -1px 0 #fff, 0 1px #fff, 0 -1px #fff, 1px 1px 2px #999; }
.mark small { display: block; height: 12px; font: 11px/12px "Noto Sans", sans-serif; color: #777; text-shadow: 1px 0 #fff, -1px 0 #fff, 0 1px #fff, 0 -1px #fff; }
```
FILE: views.js
```js
// Draws the construction-plane grids of the four viewports.
const NS = "http://www.w3.org/2000/svg";
const MAJOR = 34;
const CELLS = 70;

function path(svg, cls, d, crisp) {
  const p = document.createElementNS(NS, "path");
  p.setAttribute("class", cls);
  p.setAttribute("d", d);
  if (crisp) p.setAttribute("shape-rendering", "crispEdges");
  svg.append(p);
}

function label(svg, text, x, y) {
  const t = document.createElementNS(NS, "text");
  t.setAttribute("x", x);
  t.setAttribute("y", y);
  t.textContent = text;
  svg.append(t);
}

function ortho(svg, w, h) {
  const cx = Math.round(w / 2), cy = Math.floor(h / 2) - 1;
  const lines = { minor: "", major: "" };
  for (let i = -CELLS; i <= CELLS; i++) {
    const kind = i % 5 ? "minor" : "major";
    const o = Math.round(i * MAJOR / 5) + 0.5;
    lines[kind] += `M${cx + o} 0V${h}M0 ${cy + o}H${w}`;
  }
  path(svg, "minor", lines.minor, true);
  path(svg, "major", lines.major, true);
  path(svg, "xaxis", `M${cx} ${cy + 1}H${w}`, true);
  path(svg, "yaxis", `M${cx} ${cy}V0`, true);
  path(svg, "triad", `M36.500 ${h - 66}V${h - 35.5}H66`, true);
  label(svg, svg.dataset.v, 39, h - 66);
  label(svg, svg.dataset.h, 69, h - 34);
}

function perspective(svg, w, h) {
  svg.classList.add("persp");
  const cx = w / 2, cy = h / 2, f = 411, unit = 0.765 / CELLS;
  const depth = (x, y) => 1 + (-0.433 * x + 0.75 * y) * unit;
  const near = 0.08;
  const project = (x, y) => {
    const k = f * unit / depth(x, y);
    return `${(cx + (0.866 * x + 0.5 * y) * k).toFixed(1)} ${(cy + (0.25 * x - 0.433 * y) * k).toFixed(1)}`;
  };
  const segment = (x1, y1, x2, y2) => {
    const a = depth(x1, y1), b = depth(x2, y2);
    if (a < near) { const t = (near - a) / (b - a); x1 += (x2 - x1) * t; y1 += (y2 - y1) * t; }
    if (b < near) { const t = (near - b) / (a - b); x2 += (x1 - x2) * t; y2 += (y1 - y2) * t; }
    return `M${project(x1, y1)}L${project(x2, y2)}`;
  };
  const lines = { minor: "", major: "" };
  for (let i = -CELLS; i <= CELLS; i++) {
    lines[i % 5 ? "minor" : "major"] += segment(i, -CELLS, i, CELLS) + segment(-CELLS, i, CELLS, i);
  }
  path(svg, "minor", lines.minor);
  path(svg, "major", lines.major);
  path(svg, "xaxis", segment(0, 0, CELLS, 0));
  path(svg, "yaxis", segment(0, 0, 0, CELLS));
  const b = h - 35;
  path(svg, "triad", `M36.500 ${b - 27}V${b}L63 ${b + 8}M36.500 ${b}L51 ${b - 12}`);
  label(svg, "z", 39, b - 26);
  label(svg, "y", 53, b - 13);
  label(svg, "x", 66, b + 9);
}

function draw() {
  document.querySelectorAll(".scene").forEach(svg => {
    svg.replaceChildren();
    const { width, height } = svg.getBoundingClientRect();
    (svg.dataset.view === "persp" ? perspective : ortho)(svg, width, height);
  });
}
draw();
addEventListener("resize", draw);
```
